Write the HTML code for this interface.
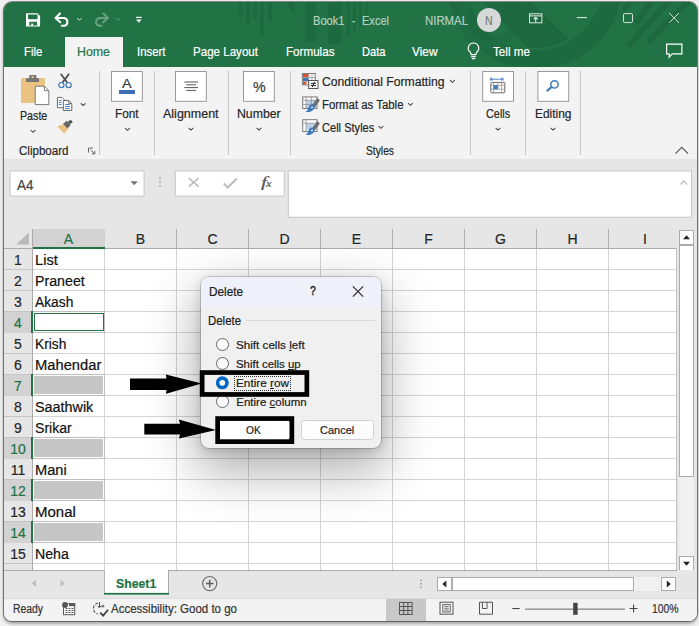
<!DOCTYPE html>
<html lang="en"><head><meta charset="utf-8"><title>Book1 - Excel</title>
<style>
html,body{margin:0;padding:0}
body{width:699px;height:626px;overflow:hidden;background:#f0f0f0;position:relative;font-family:"Liberation Sans",sans-serif}
.t{position:absolute;white-space:nowrap;display:block;-webkit-text-stroke:0.2px currentColor}
.a{position:absolute;display:block}
#win{position:absolute;left:4px;top:2px;width:693px;height:618.5px;border-radius:8px;overflow:hidden;background:#e6e6e6;box-shadow:0 0 0 1px rgba(0,0,0,.42),0 2px 3px 1px rgba(0,0,0,.30)}
#page{position:absolute;left:0;top:0;width:699px;height:626px}
svg{position:absolute;overflow:visible}

</style></head>
<body>
<div id="win"><div id="page" style="left:-4px;top:-2px">
<div class="a" style="left:0px;top:0px;width:699px;height:67px;background:#217346;"></div>
<svg style="left:0px;top:0px;" width="699" height="67" viewBox="0 0 699 67">
<defs><clipPath id="tb"><rect x="0" y="2" width="699" height="65"/></clipPath><clipPath id="rg"><circle cx="535" cy="-18" r="66"/></clipPath></defs>
<g clip-path="url(#tb)">
<g fill="#1e6a40">
<rect x="239" y="2" width="4" height="15"/><rect x="246" y="2" width="4" height="24"/><rect x="253" y="2" width="4" height="17"/><rect x="260" y="2" width="4" height="32"/><rect x="268" y="2" width="4" height="20"/>
<polygon points="286,2 294.5,2 294.5,14"/>
<rect x="305" y="2" width="11.5" height="40"/><rect x="328" y="2" width="13.5" height="42"/>
<rect x="347" y="2" width="3" height="34"/><rect x="353" y="2" width="3" height="30"/><rect x="359" y="2" width="3" height="26"/><rect x="365" y="2" width="3" height="22"/>
</g>
<circle cx="535" cy="-18" r="78" fill="none" stroke="#1e6a40" stroke-width="19"/>
<circle cx="489" cy="19" r="26" fill="none" stroke="#1f6d42" stroke-width="9"/>
<g stroke="#1d683e" stroke-width="4.2" clip-path="url(#rg)"><line x1="479" y1="-5" x2="559" y2="75"/><line x1="486" y1="-5" x2="566" y2="75"/><line x1="493" y1="-5" x2="573" y2="75"/><line x1="500" y1="-5" x2="580" y2="75"/><line x1="507" y1="-5" x2="587" y2="75"/><line x1="514" y1="-5" x2="594" y2="75"/><line x1="521" y1="-5" x2="601" y2="75"/></g>
<g stroke="#1d683e" stroke-width="6"><line x1="635" y1="-2" x2="623" y2="9"/><line x1="654" y1="-2.5" x2="636" y2="23"/><line x1="672" y1="-2.3" x2="628.5" y2="45.5"/><line x1="692" y1="-2.3" x2="648.2" y2="42.3"/></g>
</g>
</svg>
<svg style="left:26px;top:13px;" width="15" height="14" viewBox="0 0 15 14"><path d="M0.9 0.3H11.4L14.1 3V12.7A0.9 0.9 0 0 1 13.2 13.6H0.9A0.9 0.9 0 0 1 0 12.7V1.2A0.9 0.9 0 0 1 0.9 0.3Z" fill="#fff"/><path d="M2 1.5H11.6V5.4L10.9 6.2H2.7L2 5.4Z" fill="#217346"/><path d="M1.7 8.6H12.5V12.3H1.7Z" fill="#fff"/><path d="M3.3 8.8H11V12.5H3.3Z" fill="#217346"/><rect x="5.2" y="10.6" width="2" height="2" fill="#fff"/><path d="M12.6 3.2V12.3H13V3.4Z" fill="#217346" opacity="0"/></svg>
<svg style="left:54px;top:12px;" width="16" height="15" viewBox="0 0 16 15"><path d="M6 1.5L1.5 6L6.3 10.3" fill="none" stroke="#fff" stroke-width="2" stroke-linecap="round" stroke-linejoin="round"/><path d="M2 6H10.3A4 4 0 0 1 10.3 13.8H7.8" fill="none" stroke="#fff" stroke-width="2" stroke-linecap="round"/></svg>
<svg style="left:76px;top:17px;" width="7" height="5" viewBox="0 0 7 5"><g transform="translate(0.5,0.5)"><path d="M0.5 0.5L2.8 2.8L5.1 0.5" fill="none" stroke="#fff" stroke-width="1" opacity=".75"/></g></svg>
<svg style="left:93px;top:12px;" width="17" height="15" viewBox="0 0 17 15"><g transform="translate(0.5,0)"><g transform="translate(16,0) scale(-1,1)" opacity=".33"><path d="M6 1.5L1.5 6L6.3 10.3" fill="none" stroke="#fff" stroke-width="2" stroke-linecap="round" stroke-linejoin="round"/><path d="M2 6H10.3A4 4 0 0 1 10.3 13.8H7.8" fill="none" stroke="#fff" stroke-width="2" stroke-linecap="round"/></g></g></svg>
<svg style="left:115px;top:17px;" width="7" height="5" viewBox="0 0 7 5"><g transform="translate(0.5,0.5)"><path d="M0.5 0.5L2.8 2.8L5.1 0.5" fill="none" stroke="#fff" stroke-width="1" opacity=".3"/></g></svg>
<svg style="left:135px;top:16px;" width="8" height="8" viewBox="0 0 8 8"><g transform="translate(0.8,0.5)"><rect x="0.3" y="0.3" width="5.6" height="1.2" fill="#fff"/><path d="M0.2 3H6L3.1 6.2Z" fill="#fff"/></g></svg>
<span class="t" id="t0" style='left:312.50px;top:14.84px;font-size:12px;line-height:12px;color:#b4d0c0;transform:scaleX(0.9256);transform-origin:left center;'>Book1</span>
<span class="t" id="t1" style='left:352.00px;top:14.84px;font-size:12px;line-height:12px;color:#b4d0c0;transform:scaleX(0.8000);transform-origin:left center;'>-</span>
<span class="t" id="t2" style='left:362.00px;top:14.84px;font-size:12px;line-height:12px;color:#b4d0c0;transform:scaleX(0.9201);transform-origin:left center;'>Excel</span>
<span class="t" id="t3" style='left:424.50px;top:14.84px;font-size:12px;line-height:12px;color:#b4d0c0;transform:scaleX(0.9483);transform-origin:left center;'>NIRMAL</span>
<div class="a" style="left:477px;top:8px;width:24px;height:24px;border-radius:50%;background:#d6d9d7"></div>
<span class="t" id="t4" style='left:485.20px;top:14.54px;font-size:12px;line-height:12px;color:#6a706c;transform:scaleX(0.8764);transform-origin:left center;-webkit-text-stroke:0;'>N</span>
<svg style="left:529px;top:13px;" width="14" height="11" viewBox="0 0 14 11"><g transform="translate(0,0.3)"><rect x="0.5" y="0.5" width="12.4" height="9" fill="none" stroke="#dfeae4" stroke-width="1"/><line x1="0.5" y1="2.6" x2="12.9" y2="2.6" stroke="#dfeae4" stroke-width="1"/><path d="M6.7 8.6V4M4.6 6L6.7 3.9L8.8 6" fill="none" stroke="#dfeae4" stroke-width="1.1"/></g></svg>
<svg style="left:576px;top:16px;" width="12" height="3" viewBox="0 0 12 3"><g transform="translate(0.8,0.9)"><rect x="0" y="0.1" width="10.2" height="1.1" fill="#d5e4dc"/></g></svg>
<svg style="left:622px;top:12px;" width="12" height="12" viewBox="0 0 12 12"><g transform="translate(0.6,0.7)"><rect x="0.9" y="0.9" width="9" height="9" rx="1.2" fill="none" stroke="#d5e4dc" stroke-width="1"/></g></svg>
<svg style="left:669px;top:12px;" width="11" height="12" viewBox="0 0 11 12"><g transform="translate(0,0.8)"><path d="M0.2 0.2L10 10M10 0.2L0.2 10" stroke="#d5e4dc" stroke-width="1" fill="none"/></g></svg>
<div class="a" style="left:65px;top:37px;width:58px;height:31px;background:#f3f3f3"></div>
<span class="t" id="t5" style='left:24.00px;top:44.50px;font-size:13px;line-height:13px;color:#fff;transform:scaleX(0.8829);transform-origin:left center;'>File</span>
<span class="t" id="t6" style='left:77.00px;top:44.50px;font-size:13px;line-height:13px;color:#217346;transform:scaleX(0.9514);transform-origin:left center;'>Home</span>
<span class="t" id="t7" style='left:137.00px;top:44.50px;font-size:13px;line-height:13px;color:#fff;transform:scaleX(0.8765);transform-origin:left center;'>Insert</span>
<span class="t" id="t8" style='left:193.00px;top:44.50px;font-size:13px;line-height:13px;color:#fff;transform:scaleX(0.8902);transform-origin:left center;'>Page Layout</span>
<span class="t" id="t9" style='left:285.50px;top:44.50px;font-size:13px;line-height:13px;color:#fff;transform:scaleX(0.8950);transform-origin:left center;'>Formulas</span>
<span class="t" id="t10" style='left:361.50px;top:44.50px;font-size:13px;line-height:13px;color:#fff;transform:scaleX(0.8555);transform-origin:left center;'>Data</span>
<span class="t" id="t11" style='left:412.00px;top:44.50px;font-size:13px;line-height:13px;color:#fff;transform:scaleX(0.9122);transform-origin:left center;'>View</span>
<svg style="left:467px;top:42px;" width="13" height="19" viewBox="0 0 13 19"><path d="M6.5 1A5.2 5.2 0 0 0 3.3 10.3C3.9 11 4.1 11.6 4.1 12.6H8.9C8.9 11.6 9.1 11 9.7 10.3A5.2 5.2 0 0 0 6.5 1Z" fill="none" stroke="#fff" stroke-width="1.2"/><path d="M4.2 14.6H8.8M4.8 16.6H8.2" stroke="#fff" stroke-width="1.2" fill="none"/></svg>
<span class="t" id="t12" style='left:493.00px;top:44.50px;font-size:13px;line-height:13px;color:#fff;transform:scaleX(0.8983);transform-origin:left center;'>Tell me</span>
<svg style="left:666px;top:43px;" width="17" height="16" viewBox="0 0 17 16"><g transform="translate(0,0.5)"><path d="M0.6 0.6H15.9V10.3H6.2L3.2 13.6V10.3H0.6Z" fill="none" stroke="#fff" stroke-width="1.2" stroke-linejoin="miter"/></g></svg>
<div class="a" style="left:0px;top:67px;width:699px;height:91.5px;background:#f3f3f3;"></div>
<div class="a" style="left:0px;top:158.5px;width:699px;height:1px;background:#dadada;"></div>
<div class="a" style="left:99.0px;top:71px;width:1px;height:84px;background:#c9c9c9;"></div>
<div class="a" style="left:153.5px;top:71px;width:1px;height:84px;background:#c9c9c9;"></div>
<div class="a" style="left:228.0px;top:71px;width:1px;height:84px;background:#c9c9c9;"></div>
<div class="a" style="left:290.0px;top:71px;width:1px;height:84px;background:#c9c9c9;"></div>
<div class="a" style="left:470.0px;top:71px;width:1px;height:84px;background:#c9c9c9;"></div>
<div class="a" style="left:525.0px;top:71px;width:1px;height:84px;background:#c9c9c9;"></div>
<div class="a" style="left:580.0px;top:71px;width:1px;height:84px;background:#c9c9c9;"></div>
<svg style="left:20px;top:74px;" width="30" height="32" viewBox="0 0 30 32">
<rect x="1" y="4" width="24" height="25" rx="1.2" fill="#eac282"/>
<path d="M6 4.3H19V8H6Z" fill="#767676"/><path d="M10 1H15.6A0.8 0.8 0 0 1 16.4 1.8V5H9.2V1.8A0.8 0.8 0 0 1 10 1Z" fill="#767676"/><rect x="11.6" y="2.2" width="2.4" height="1.8" fill="#eac282"/>
<path d="M15.2 12.2H24.3L28.8 16.7V30.6H15.2Z" fill="#fff" stroke="#7b7b7b" stroke-width="1"/><path d="M24.3 12.2V16.7H28.8" fill="none" stroke="#7b7b7b" stroke-width="1"/>
</svg>
<span class="t" id="t13" style='left:19.80px;top:109.72px;font-size:12.5px;line-height:12.5px;color:#262626;transform:scaleX(0.8540);transform-origin:left center;'>Paste</span>
<svg style="left:30px;top:129px;" width="6" height="4" viewBox="0 0 6 4"><g transform="translate(0.4,0.8)"><path d="M0.3 0.3L2.7 2.5L5.1000000000000005 0.3" fill="none" stroke="#444" stroke-width="1.1" opacity="1"/></g></svg>
<svg style="left:57px;top:73px;" width="16" height="16" viewBox="0 0 16 16">
<path d="M3.7 0.8L10.4 9.8M12.1 0.8L5.4 9.8" stroke="#4f4f4f" stroke-width="1.8" fill="none"/>
<circle cx="4.4" cy="12.1" r="2.6" fill="none" stroke="#3b76b9" stroke-width="1.2"/><circle cx="11.6" cy="12.1" r="2.6" fill="none" stroke="#3b76b9" stroke-width="1.2"/>
</svg>
<svg style="left:56px;top:96px;" width="18" height="16" viewBox="0 0 18 16"><g transform="translate(0.5,0.5)">
<path d="M0.9 0.9H5.5L7.7 3.1V11.2H0.9Z" fill="#fff" stroke="#6a6a6a" stroke-width="1"/>
<path d="M2.4 4H5M2.4 6H5M2.4 8H5" stroke="#3b76b9" stroke-width=".9"/>
<path d="M6.8 4H12.2L15.3 7.1V14H6.8Z" fill="#fff" stroke="#6a6a6a" stroke-width="1"/><path d="M12.2 4V7.1H15.3" fill="none" stroke="#6a6a6a" stroke-width=".9"/>
<path d="M8.6 8H13.4M8.6 10H13.4M8.6 12H13.4" stroke="#3b76b9" stroke-width=".9"/>
</g></svg>
<svg style="left:80px;top:103px;" width="6" height="3" viewBox="0 0 6 3"><g transform="translate(0.5,0)"><path d="M0.3 0.3L2.7 2.5L5.1000000000000005 0.3" fill="none" stroke="#444" stroke-width="1.1" opacity="1"/></g></svg>
<svg style="left:56px;top:119px;" width="18" height="16" viewBox="0 0 18 16"><g transform="translate(0.5,0.5)">
<path d="M0.6 6.8L8.2 4.6L11.8 9.6L7.6 14.2Z" fill="#eac282"/>
<path d="M6.6 4.2L10.2 1.2L14.2 5.6L11 9Z" fill="#666"/>
<path d="M11.2 2.2L14.2 0.2L16.3 2.4L13.6 4.8Z" fill="#555"/>
</g></svg>
<span class="t" id="t14" style='left:18.50px;top:144.72px;font-size:12.5px;line-height:12.5px;color:#262626;transform:scaleX(0.9250);transform-origin:left center;'>Clipboard</span>
<svg style="left:88px;top:147px;" width="8" height="8" viewBox="0 0 8 8"><g transform="translate(0,0.5)"><path d="M0.5 5V0.5H5" fill="none" stroke="#666" stroke-width="1"/><path d="M2.6 2.4L6.6 6.2M6.8 3.4V6.4H3.8" fill="none" stroke="#666" stroke-width="1"/></g></svg>
<svg style="left:111px;top:71px;" width="32" height="31" viewBox="0 0 32 31"><rect x="0.5" y="0.5" width="30.8" height="29.8" rx="0" fill="#fff" stroke="#999" stroke-width="1"/></svg>
<span class="t" id="t15" style='left:122.30px;top:76.87px;font-size:13.5px;line-height:13.5px;color:#3a3a3a;transform:scaleX(1.0648);transform-origin:left center;'>A</span>
<div class="a" style="left:119px;top:90px;width:15.5px;height:3.5px;background:#3e6fb5;"></div>
<span class="t" id="t16" style='left:115.40px;top:107.52px;font-size:12.5px;line-height:12.5px;color:#262626;transform:scaleX(0.9394);transform-origin:left center;'>Font</span>
<svg style="left:124px;top:127px;" width="7" height="4" viewBox="0 0 7 4"><g transform="translate(0.8,0.8)"><path d="M0.3 0.3L2.7 2.5L5.1000000000000005 0.3" fill="none" stroke="#444" stroke-width="1.1" opacity="1"/></g></svg>
<svg style="left:175px;top:71px;" width="32" height="31" viewBox="0 0 32 31"><rect x="0.5" y="0.5" width="30.8" height="29.8" rx="0" fill="#fff" stroke="#999" stroke-width="1"/></svg>
<svg style="left:184px;top:81px;" width="15" height="11" viewBox="0 0 15 11"><path d="M0.3 1H14M2.3 3.8H12M0.3 6.6H14M2.3 9.4H12" stroke="#555" stroke-width="1" fill="none"/></svg>
<span class="t" id="t17" style='left:163.00px;top:107.52px;font-size:12.5px;line-height:12.5px;color:#262626;'>Alignment</span>
<svg style="left:188px;top:127px;" width="6" height="4" viewBox="0 0 6 4"><g transform="translate(0.3,0.6)"><path d="M0.3 0.3L2.7 2.5L5.1000000000000005 0.3" fill="none" stroke="#444" stroke-width="1.1" opacity="1"/></g></svg>
<svg style="left:243px;top:71px;" width="32" height="31" viewBox="0 0 32 31"><rect x="0.5" y="0.5" width="30.8" height="29.8" rx="0" fill="#fff" stroke="#999" stroke-width="1"/></svg>
<span class="t" id="t18" style='left:252.80px;top:79.00px;font-size:15px;line-height:15px;color:#3a3a3a;transform:scaleX(0.9518);transform-origin:left center;'>%</span>
<span class="t" id="t19" style='left:237.00px;top:107.52px;font-size:12.5px;line-height:12.5px;color:#262626;transform:scaleX(0.9827);transform-origin:left center;'>Number</span>
<svg style="left:256px;top:127px;" width="6" height="4" viewBox="0 0 6 4"><g transform="translate(0.3,0.6)"><path d="M0.3 0.3L2.7 2.5L5.1000000000000005 0.3" fill="none" stroke="#444" stroke-width="1.1" opacity="1"/></g></svg>
<svg style="left:301px;top:72px;" width="19" height="18" viewBox="0 0 19 18">
<rect x="1.4" y="1.5" width="12.8" height="11.4" fill="#fff" stroke="#7a7a7a" stroke-width="1"/>
<path d="M7.7 1.5V12.9M11 1.5V12.9M1.4 5.5H14.2M1.4 9.4H14.2" stroke="#9a9a9a" stroke-width=".8"/>
<rect x="1.9" y="2" width="5.5" height="3.1" fill="#d9532c"/><rect x="1.9" y="5.9" width="5.5" height="3.1" fill="#3f78bd"/><rect x="1.9" y="9.8" width="3.6" height="2.7" fill="#d9532c"/>
<rect x="7.7" y="8.5" width="9.3" height="8" fill="#fff" stroke="#555" stroke-width="1"/>
<path d="M9.8 11.4H14.9M9.8 13.6H14.9M13.6 9.9L11.2 15.2" stroke="#222" stroke-width="1"/>
</svg>
<span class="t" id="t20" style='left:321.50px;top:76.22px;font-size:12.5px;line-height:12.5px;color:#262626;transform:scaleX(0.9740);transform-origin:left center;'>Conditional Formatting</span>
<svg style="left:449px;top:79px;" width="7" height="4" viewBox="0 0 7 4"><g transform="translate(0.7,0.8)"><path d="M0.3 0.3L2.7 2.5L5.1000000000000005 0.3" fill="none" stroke="#444" stroke-width="1.1" opacity="1"/></g></svg>
<svg style="left:301px;top:95px;" width="20" height="18" viewBox="0 0 20 18">
<rect x="1.7" y="1.9" width="14.3" height="11.6" fill="#fff" stroke="#7a7a7a" stroke-width="1"/>
<rect x="5.2" y="5.4" width="10.3" height="7.6" fill="#bcd2ea"/>
<path d="M5.1 1.9V13.5M10.3 1.9V13.5M1.7 5.3H16M1.7 9.4H16" stroke="#8a8a8a" stroke-width=".8"/>
<path d="M16.4 2.8L18.8 5.6L14 12.2L11.3 10Z" fill="#6e6e6e"/>
<path d="M11.6 9.6C8.8 9.2 7.8 11.6 7.2 13.4C6.8 14.8 5.8 15.9 4.4 16.8C8.6 17.7 13 16.4 13.9 11.6Z" fill="#3f78bd"/><circle cx="11" cy="12.4" r="1" fill="#dce8f5"/>
</svg>
<span class="t" id="t21" style='left:321.50px;top:99.22px;font-size:12.5px;line-height:12.5px;color:#262626;transform:scaleX(0.9116);transform-origin:left center;'>Format as Table</span>
<svg style="left:407px;top:102px;" width="7" height="4" viewBox="0 0 7 4"><g transform="translate(0.7,0.8)"><path d="M0.3 0.3L2.7 2.5L5.1000000000000005 0.3" fill="none" stroke="#444" stroke-width="1.1" opacity="1"/></g></svg>
<svg style="left:301px;top:118px;" width="20" height="18" viewBox="0 0 20 18">
<rect x="1.7" y="1.7" width="14.3" height="11.8" fill="#fff" stroke="#7a7a7a" stroke-width="1"/>
<rect x="5.2" y="5.3" width="9.6" height="6.4" fill="#bcd2ea"/>
<path d="M5.1 1.7V13.5M1.7 5.2H16" stroke="#8a8a8a" stroke-width=".8"/>
<path d="M16.4 2.8L18.8 5.6L14 12.2L11.3 10Z" fill="#6e6e6e"/>
<path d="M11.6 9.6C8.8 9.2 7.8 11.6 7.2 13.4C6.8 14.8 5.8 15.9 4.4 16.8C8.6 17.7 13 16.4 13.9 11.6Z" fill="#3f78bd"/><circle cx="11" cy="12.4" r="1" fill="#dce8f5"/>
</svg>
<span class="t" id="t22" style='left:321.50px;top:122.22px;font-size:12.5px;line-height:12.5px;color:#262626;transform:scaleX(0.8857);transform-origin:left center;'>Cell Styles</span>
<svg style="left:378px;top:125px;" width="6" height="4" viewBox="0 0 6 4"><g transform="translate(0.2,0.8)"><path d="M0.3 0.3L2.7 2.5L5.1000000000000005 0.3" fill="none" stroke="#444" stroke-width="1.1" opacity="1"/></g></svg>
<span class="t" id="t23" style='left:366.30px;top:144.72px;font-size:12.5px;line-height:12.5px;color:#262626;transform:scaleX(0.8224);transform-origin:left center;'>Styles</span>
<svg style="left:482px;top:71px;" width="32" height="31" viewBox="0 0 32 31"><g transform="translate(0.2,0)"><rect x="0.5" y="0.5" width="30.8" height="29.8" rx="0" fill="#fff" stroke="#999" stroke-width="1"/></g></svg>
<svg style="left:489px;top:76px;" width="18" height="19" viewBox="0 0 18 19">
<path d="M1.6 3.2H14M1.6 1.7V4.7M14 1.7V4.7M3.6 1.8L2 3.2L3.6 4.6M12 1.8L13.6 3.2L12 4.6" stroke="#3f78bd" stroke-width=".9" fill="none"/>
<rect x="1.8" y="6.4" width="14" height="10.4" rx=".8" fill="#fff" stroke="#6a6a6a" stroke-width="1"/>
<path d="M1.8 9.3H15.8M1.8 13.2H15.8M4.6 6.4V16.8M8.9 6.4V13.2M12.6 6.4V16.8" stroke="#8a8a8a" stroke-width=".7"/>
<rect x="4.6" y="9.3" width="4.3" height="3.9" fill="#3f78bd"/>
</svg>
<span class="t" id="t24" style='left:485.80px;top:107.52px;font-size:12.5px;line-height:12.5px;color:#262626;transform:scaleX(0.8706);transform-origin:left center;'>Cells</span>
<svg style="left:495px;top:127px;" width="6" height="4" viewBox="0 0 6 4"><g transform="translate(0.3,0.6)"><path d="M0.3 0.3L2.7 2.5L5.1000000000000005 0.3" fill="none" stroke="#444" stroke-width="1.1" opacity="1"/></g></svg>
<svg style="left:537px;top:71px;" width="33" height="31" viewBox="0 0 33 31"><g transform="translate(0.4,0)"><rect x="0.5" y="0.5" width="30.8" height="29.8" rx="0" fill="#fff" stroke="#999" stroke-width="1"/></g></svg>
<svg style="left:545px;top:78px;" width="16" height="16" viewBox="0 0 16 16"><circle cx="9.5" cy="6.4" r="3.7" fill="none" stroke="#3f78bd" stroke-width="1.5"/><path d="M6.6 9L2.4 12.6" stroke="#3f78bd" stroke-width="2.1" stroke-linecap="round"/></svg>
<span class="t" id="t25" style='left:534.70px;top:107.52px;font-size:12.5px;line-height:12.5px;color:#262626;transform:scaleX(0.9546);transform-origin:left center;'>Editing</span>
<svg style="left:550px;top:127px;" width="6" height="4" viewBox="0 0 6 4"><g transform="translate(0.3,0.6)"><path d="M0.3 0.3L2.7 2.5L5.1000000000000005 0.3" fill="none" stroke="#444" stroke-width="1.1" opacity="1"/></g></svg>
<svg style="left:675px;top:146px;" width="14" height="9" viewBox="0 0 14 9"><g transform="translate(0,0.5)"><path d="M0.5 7.2L6.8 0.8L13.1 7.2" fill="none" stroke="#555" stroke-width="1.1"/></g></svg>
<div class="a" style="left:0px;top:159px;width:699px;height:70px;background:#e6e6e6;"></div>
<svg style="left:9px;top:170px;" width="136" height="27" viewBox="0 0 136 27"><g transform="translate(0.6,0.4)"><rect x="0.5" y="0.5" width="134" height="25.2" rx="0" fill="#fff" stroke="#c6c6c6" stroke-width="1"/></g></svg>
<span class="t" id="t26" style='left:16.50px;top:177.65px;font-size:14px;line-height:14px;color:#444;transform:scaleX(0.9635);transform-origin:left center;'>A4</span>
<svg style="left:130px;top:181px;" width="9" height="5" viewBox="0 0 9 5"><g transform="translate(0.5,0)"><path d="M0 0.2H7.4L3.7 4.2Z" fill="#777"/></g></svg>
<svg style="left:159px;top:177px;" width="3" height="3" viewBox="0 0 3 3"><g transform="translate(0.2,0.7)"><rect width="1.6" height="1.6" fill="#a6a6a6"/></g></svg>
<svg style="left:159px;top:181px;" width="3" height="3" viewBox="0 0 3 3"><g transform="translate(0.2,0.5)"><rect width="1.6" height="1.6" fill="#a6a6a6"/></g></svg>
<svg style="left:159px;top:185px;" width="3" height="3" viewBox="0 0 3 3"><g transform="translate(0.2,0.2)"><rect width="1.6" height="1.6" fill="#a6a6a6"/></g></svg>
<svg style="left:174px;top:170px;" width="111" height="27" viewBox="0 0 111 27"><g transform="translate(0.8,0.4)"><rect x="0.5" y="0.5" width="109" height="25.2" rx="0" fill="#fff" stroke="#c6c6c6" stroke-width="1"/></g></svg>
<svg style="left:188px;top:177px;" width="12" height="11" viewBox="0 0 12 11"><g transform="translate(0,0.6)"><path d="M0.8 0.5L10.6 9M10.6 0.5L0.8 9" stroke="#bdbdbd" stroke-width="1.7" fill="none"/></g></svg>
<svg style="left:223px;top:177px;" width="15" height="12" viewBox="0 0 15 12"><g transform="translate(0,0.6)"><path d="M0.8 5.8L4.8 9.8L13.8 0.8" stroke="#bdbdbd" stroke-width="2.1" fill="none"/></g></svg>
<span class="t" id="t27" style='left:260.70px;top:175.10px;font-size:15px;line-height:15px;color:#555;transform:scaleX(1.4382);transform-origin:left center;font-family:"Liberation Serif",serif;font-style:italic;'>f</span>
<span class="t" id="t28" style='left:266.30px;top:179.41px;font-size:10.5px;line-height:10.5px;color:#555;transform:scaleX(1.1987);transform-origin:left center;font-family:"Liberation Serif",serif;font-style:italic;'>x</span>
<svg style="left:287px;top:170px;" width="405" height="48" viewBox="0 0 405 48"><g transform="translate(0.8,0.4)"><rect x="0.5" y="0.5" width="403.2" height="46.3" rx="0" fill="#fff" stroke="#c6c6c6" stroke-width="1"/></g></svg>
<svg style="left:680px;top:180px;" width="8" height="5" viewBox="0 0 8 5"><path d="M0.6 4.6L3.8 1L7 4.6" stroke="#c4c4c4" stroke-width="1.5" fill="none"/></svg>
<div class="a" style="left:33px;top:249px;width:643px;height:321px;background:#fff;"></div>
<div class="a" style="left:4px;top:229px;width:672px;height:19px;background:#e6e6e6;"></div>
<div class="a" style="left:4px;top:249px;width:28.5px;height:321px;background:#e6e6e6;"></div>
<div class="a" style="left:104.0px;top:249px;width:1px;height:321px;background:#d4d4d4;"></div>
<div class="a" style="left:104.0px;top:228.5px;width:1px;height:20px;background:#b1b1b1;"></div>
<div class="a" style="left:176.0px;top:249px;width:1px;height:321px;background:#d4d4d4;"></div>
<div class="a" style="left:176.0px;top:228.5px;width:1px;height:20px;background:#b1b1b1;"></div>
<div class="a" style="left:248.0px;top:249px;width:1px;height:321px;background:#d4d4d4;"></div>
<div class="a" style="left:248.0px;top:228.5px;width:1px;height:20px;background:#b1b1b1;"></div>
<div class="a" style="left:320.0px;top:249px;width:1px;height:321px;background:#d4d4d4;"></div>
<div class="a" style="left:320.0px;top:228.5px;width:1px;height:20px;background:#b1b1b1;"></div>
<div class="a" style="left:392.0px;top:249px;width:1px;height:321px;background:#d4d4d4;"></div>
<div class="a" style="left:392.0px;top:228.5px;width:1px;height:20px;background:#b1b1b1;"></div>
<div class="a" style="left:464.0px;top:249px;width:1px;height:321px;background:#d4d4d4;"></div>
<div class="a" style="left:464.0px;top:228.5px;width:1px;height:20px;background:#b1b1b1;"></div>
<div class="a" style="left:536.0px;top:249px;width:1px;height:321px;background:#d4d4d4;"></div>
<div class="a" style="left:536.0px;top:228.5px;width:1px;height:20px;background:#b1b1b1;"></div>
<div class="a" style="left:608.0px;top:249px;width:1px;height:321px;background:#d4d4d4;"></div>
<div class="a" style="left:608.0px;top:228.5px;width:1px;height:20px;background:#b1b1b1;"></div>
<div class="a" style="left:33px;top:269px;width:643px;height:1px;background:#d4d4d4;"></div>
<div class="a" style="left:4px;top:269px;width:28.5px;height:1px;background:#c6c6c6;"></div>
<div class="a" style="left:33px;top:290px;width:643px;height:1px;background:#d4d4d4;"></div>
<div class="a" style="left:4px;top:290px;width:28.5px;height:1px;background:#c6c6c6;"></div>
<div class="a" style="left:33px;top:311px;width:643px;height:1px;background:#d4d4d4;"></div>
<div class="a" style="left:4px;top:311px;width:28.5px;height:1px;background:#c6c6c6;"></div>
<div class="a" style="left:33px;top:332px;width:643px;height:1px;background:#d4d4d4;"></div>
<div class="a" style="left:4px;top:332px;width:28.5px;height:1px;background:#c6c6c6;"></div>
<div class="a" style="left:33px;top:353px;width:643px;height:1px;background:#d4d4d4;"></div>
<div class="a" style="left:4px;top:353px;width:28.5px;height:1px;background:#c6c6c6;"></div>
<div class="a" style="left:33px;top:374px;width:643px;height:1px;background:#d4d4d4;"></div>
<div class="a" style="left:4px;top:374px;width:28.5px;height:1px;background:#c6c6c6;"></div>
<div class="a" style="left:33px;top:395px;width:643px;height:1px;background:#d4d4d4;"></div>
<div class="a" style="left:4px;top:395px;width:28.5px;height:1px;background:#c6c6c6;"></div>
<div class="a" style="left:33px;top:416px;width:643px;height:1px;background:#d4d4d4;"></div>
<div class="a" style="left:4px;top:416px;width:28.5px;height:1px;background:#c6c6c6;"></div>
<div class="a" style="left:33px;top:437px;width:643px;height:1px;background:#d4d4d4;"></div>
<div class="a" style="left:4px;top:437px;width:28.5px;height:1px;background:#c6c6c6;"></div>
<div class="a" style="left:33px;top:458px;width:643px;height:1px;background:#d4d4d4;"></div>
<div class="a" style="left:4px;top:458px;width:28.5px;height:1px;background:#c6c6c6;"></div>
<div class="a" style="left:33px;top:479px;width:643px;height:1px;background:#d4d4d4;"></div>
<div class="a" style="left:4px;top:479px;width:28.5px;height:1px;background:#c6c6c6;"></div>
<div class="a" style="left:33px;top:500px;width:643px;height:1px;background:#d4d4d4;"></div>
<div class="a" style="left:4px;top:500px;width:28.5px;height:1px;background:#c6c6c6;"></div>
<div class="a" style="left:33px;top:521px;width:643px;height:1px;background:#d4d4d4;"></div>
<div class="a" style="left:4px;top:521px;width:28.5px;height:1px;background:#c6c6c6;"></div>
<div class="a" style="left:33px;top:542px;width:643px;height:1px;background:#d4d4d4;"></div>
<div class="a" style="left:4px;top:542px;width:28.5px;height:1px;background:#c6c6c6;"></div>
<div class="a" style="left:33px;top:563px;width:643px;height:1px;background:#d4d4d4;"></div>
<div class="a" style="left:4px;top:563px;width:28.5px;height:1px;background:#c6c6c6;"></div>
<div class="a" style="left:4px;top:248px;width:672px;height:1px;background:#ababab;"></div>
<div class="a" style="left:32px;top:229px;width:1px;height:341px;background:#ababab;"></div>
<div class="a" style="left:676px;top:248px;width:1px;height:323px;background:#c0c0c0;"></div>
<svg style="left:16px;top:232px;" width="14" height="14" viewBox="0 0 14 14"><path d="M0.3 12.6H12.8V0.5Z" fill="#b9b9b9"/></svg>
<div class="a" style="left:33px;top:228.5px;width:71.5px;height:18.5px;background:#d2d2d2;"></div>
<div class="a" style="left:33px;top:246.7px;width:71.5px;height:2px;background:#217346;"></div>
<span class="t" id="t29" style='left:63.83px;top:232.15px;font-size:14px;line-height:14px;color:#217346;'>A</span>
<span class="t" id="t30" style='left:135.83px;top:232.15px;font-size:14px;line-height:14px;color:#262626;'>B</span>
<span class="t" id="t31" style='left:207.44px;top:232.15px;font-size:14px;line-height:14px;color:#262626;'>C</span>
<span class="t" id="t32" style='left:279.44px;top:232.15px;font-size:14px;line-height:14px;color:#262626;'>D</span>
<span class="t" id="t33" style='left:351.83px;top:232.15px;font-size:14px;line-height:14px;color:#262626;'>E</span>
<span class="t" id="t34" style='left:424.22px;top:232.15px;font-size:14px;line-height:14px;color:#262626;'>F</span>
<span class="t" id="t35" style='left:495.05px;top:232.15px;font-size:14px;line-height:14px;color:#262626;'>G</span>
<span class="t" id="t36" style='left:567.44px;top:232.15px;font-size:14px;line-height:14px;color:#262626;'>H</span>
<span class="t" id="t37" style='left:643.05px;top:232.15px;font-size:14px;line-height:14px;color:#262626;'>I</span>
<span class="t" id="t38" style='left:14.10px;top:253.15px;font-size:14px;line-height:14px;color:#262626;'>1</span>
<span class="t" id="t39" style='left:34.90px;top:253.15px;font-size:14px;line-height:14px;color:#111;transform:scaleX(1.0460);transform-origin:left center;'>List</span>
<span class="t" id="t40" style='left:14.10px;top:274.15px;font-size:14px;line-height:14px;color:#262626;'>2</span>
<span class="t" id="t41" style='left:34.90px;top:274.15px;font-size:14px;line-height:14px;color:#111;transform:scaleX(1.0154);transform-origin:left center;'>Praneet</span>
<span class="t" id="t42" style='left:14.10px;top:295.15px;font-size:14px;line-height:14px;color:#262626;'>3</span>
<span class="t" id="t43" style='left:34.90px;top:295.15px;font-size:14px;line-height:14px;color:#111;transform:scaleX(0.9840);transform-origin:left center;'>Akash</span>
<div class="a" style="left:4px;top:311.5px;width:28px;height:21px;background:#d2d2d2;"></div>
<div class="a" style="left:31px;top:311px;width:2px;height:22px;background:#217346;"></div>
<div class="a" style="left:33px;top:311px;width:72px;height:1px;background:#bebebe;"></div>
<div class="a" style="left:33px;top:332px;width:72px;height:1px;background:#bebebe;"></div>
<div class="a" style="left:104px;top:311px;width:1px;height:22px;background:#bebebe;"></div>
<div class="a" style="left:34px;top:313px;width:69.5px;height:18.2px;border:1.3px solid #217346;box-sizing:border-box;background:#fff"></div>
<span class="t" id="t44" style='left:14.10px;top:316.15px;font-size:14px;line-height:14px;color:#217346;'>4</span>
<span class="t" id="t45" style='left:14.10px;top:337.15px;font-size:14px;line-height:14px;color:#262626;'>5</span>
<span class="t" id="t46" style='left:34.90px;top:337.15px;font-size:14px;line-height:14px;color:#111;transform:scaleX(0.9810);transform-origin:left center;'>Krish</span>
<span class="t" id="t47" style='left:14.10px;top:358.15px;font-size:14px;line-height:14px;color:#262626;'>6</span>
<span class="t" id="t48" style='left:34.90px;top:358.15px;font-size:14px;line-height:14px;color:#111;transform:scaleX(1.0516);transform-origin:left center;'>Mahendar</span>
<div class="a" style="left:4px;top:374.5px;width:28px;height:21px;background:#d2d2d2;"></div>
<div class="a" style="left:31px;top:374px;width:2px;height:22px;background:#217346;"></div>
<div class="a" style="left:33px;top:374px;width:72px;height:1px;background:#bebebe;"></div>
<div class="a" style="left:33px;top:395px;width:72px;height:1px;background:#bebebe;"></div>
<div class="a" style="left:104px;top:374px;width:1px;height:22px;background:#bebebe;"></div>
<div class="a" style="left:34.3px;top:375.8px;width:68.8px;height:18px;background:#c6c6c6;"></div>
<span class="t" id="t49" style='left:14.10px;top:379.15px;font-size:14px;line-height:14px;color:#217346;'>7</span>
<span class="t" id="t50" style='left:14.10px;top:400.15px;font-size:14px;line-height:14px;color:#262626;'>8</span>
<span class="t" id="t51" style='left:34.90px;top:400.15px;font-size:14px;line-height:14px;color:#111;transform:scaleX(1.0262);transform-origin:left center;'>Saathwik</span>
<span class="t" id="t52" style='left:14.10px;top:421.15px;font-size:14px;line-height:14px;color:#262626;'>9</span>
<span class="t" id="t53" style='left:34.90px;top:421.15px;font-size:14px;line-height:14px;color:#111;transform:scaleX(1.0065);transform-origin:left center;'>Srikar</span>
<div class="a" style="left:4px;top:437.5px;width:28px;height:21px;background:#d2d2d2;"></div>
<div class="a" style="left:31px;top:437px;width:2px;height:22px;background:#217346;"></div>
<div class="a" style="left:33px;top:437px;width:72px;height:1px;background:#bebebe;"></div>
<div class="a" style="left:33px;top:458px;width:72px;height:1px;background:#bebebe;"></div>
<div class="a" style="left:104px;top:437px;width:1px;height:22px;background:#bebebe;"></div>
<div class="a" style="left:34.3px;top:438.8px;width:68.8px;height:18px;background:#c6c6c6;"></div>
<span class="t" id="t54" style='left:10.21px;top:442.15px;font-size:14px;line-height:14px;color:#217346;'>10</span>
<span class="t" id="t55" style='left:10.73px;top:463.15px;font-size:14px;line-height:14px;color:#262626;'>11</span>
<span class="t" id="t56" style='left:34.90px;top:463.15px;font-size:14px;line-height:14px;color:#111;transform:scaleX(1.0475);transform-origin:left center;'>Mani</span>
<div class="a" style="left:4px;top:479.5px;width:28px;height:21px;background:#d2d2d2;"></div>
<div class="a" style="left:31px;top:479px;width:2px;height:22px;background:#217346;"></div>
<div class="a" style="left:33px;top:479px;width:72px;height:1px;background:#bebebe;"></div>
<div class="a" style="left:33px;top:500px;width:72px;height:1px;background:#bebebe;"></div>
<div class="a" style="left:104px;top:479px;width:1px;height:22px;background:#bebebe;"></div>
<div class="a" style="left:34.3px;top:480.8px;width:68.8px;height:18px;background:#c6c6c6;"></div>
<span class="t" id="t57" style='left:10.21px;top:484.15px;font-size:14px;line-height:14px;color:#217346;'>12</span>
<span class="t" id="t58" style='left:10.21px;top:505.15px;font-size:14px;line-height:14px;color:#262626;'>13</span>
<span class="t" id="t59" style='left:34.90px;top:505.15px;font-size:14px;line-height:14px;color:#111;transform:scaleX(1.0697);transform-origin:left center;'>Monal</span>
<div class="a" style="left:4px;top:521.5px;width:28px;height:21px;background:#d2d2d2;"></div>
<div class="a" style="left:31px;top:521px;width:2px;height:22px;background:#217346;"></div>
<div class="a" style="left:33px;top:521px;width:72px;height:1px;background:#bebebe;"></div>
<div class="a" style="left:33px;top:542px;width:72px;height:1px;background:#bebebe;"></div>
<div class="a" style="left:104px;top:521px;width:1px;height:22px;background:#bebebe;"></div>
<div class="a" style="left:34.3px;top:522.8px;width:68.8px;height:18px;background:#c6c6c6;"></div>
<span class="t" id="t60" style='left:10.21px;top:526.15px;font-size:14px;line-height:14px;color:#217346;'>14</span>
<span class="t" id="t61" style='left:10.21px;top:547.15px;font-size:14px;line-height:14px;color:#262626;'>15</span>
<span class="t" id="t62" style='left:34.90px;top:547.15px;font-size:14px;line-height:14px;color:#111;transform:scaleX(1.0099);transform-origin:left center;'>Neha</span>
<div class="a" style="left:677px;top:229px;width:20px;height:342px;background:#e6e6e6;"></div>
<div class="a" style="left:679px;top:230px;width:15px;height:15px;background:#fff;border:1px solid #ababab;box-sizing:border-box"></div>
<svg style="left:683px;top:235px;" width="7" height="5" viewBox="0 0 7 5"><path d="M0 4.3H7L3.5 0.3Z" fill="#222"/></svg>
<div class="a" style="left:679px;top:245px;width:15px;height:232px;background:#fff;border:1px solid #ababab;box-sizing:border-box"></div>
<div class="a" style="left:679px;top:477px;width:15px;height:80px;background:#f1f1f1;"></div>
<div class="a" style="left:679px;top:556px;width:15px;height:15px;background:#fff;border:1px solid #ababab;box-sizing:border-box"></div>
<svg style="left:683px;top:561px;" width="7" height="6" viewBox="0 0 7 6"><g transform="translate(0,0.5)"><path d="M0 0.3H7L3.5 4.3Z" fill="#222"/></g></svg>
<div class="a" style="left:4px;top:570px;width:693px;height:28px;background:#e6e6e6;"></div>
<div class="a" style="left:4px;top:570px;width:673px;height:1px;background:#ababab;"></div>
<svg style="left:31px;top:579px;" width="6" height="9" viewBox="0 0 6 9"><path d="M5 0.5V8L0.5 4.25Z" fill="#c3c3c3"/></svg>
<svg style="left:60px;top:579px;" width="6" height="9" viewBox="0 0 6 9"><path d="M0.5 0.5V8L5 4.25Z" fill="#c3c3c3"/></svg>
<div class="a" style="left:104px;top:570px;width:65px;height:24px;background:#fff;"></div>
<div class="a" style="left:104px;top:570px;width:1px;height:24px;background:#b5b5b5;"></div>
<div class="a" style="left:168px;top:570px;width:1px;height:24px;background:#ababab;"></div>
<svg style="left:104px;top:592px;" width="66" height="3" viewBox="0 0 66 3"><g transform="translate(0,0.9)"><rect width="65" height="1.7" fill="#217346"/></g></svg>
<span class="t" id="t63" style='left:116.00px;top:577.00px;font-size:13px;line-height:13px;color:#217346;font-weight:bold;transform:scaleX(0.9428);transform-origin:left center;'>Sheet1</span>
<svg style="left:201px;top:575px;" width="18" height="18" viewBox="0 0 18 18"><circle cx="8.7" cy="8.6" r="7.1" fill="none" stroke="#6e6e6e" stroke-width="1.2"/><path d="M4.9 8.6H12.5M8.7 4.8V12.4" stroke="#5e5e5e" stroke-width="1.5"/></svg>
<svg style="left:420px;top:579px;" width="3" height="3" viewBox="0 0 3 3"><g transform="translate(0.3,0.5)"><rect width="1.6" height="1.6" fill="#a2a2a2"/></g></svg>
<svg style="left:420px;top:583px;" width="3" height="2" viewBox="0 0 3 2"><g transform="translate(0.3,0)"><rect width="1.6" height="1.6" fill="#a2a2a2"/></g></svg>
<svg style="left:420px;top:586px;" width="3" height="3" viewBox="0 0 3 3"><g transform="translate(0.3,0.5)"><rect width="1.6" height="1.6" fill="#a2a2a2"/></g></svg>
<div class="a" style="left:452px;top:577px;width:209px;height:14px;background:#f1f1f1;"></div>
<div class="a" style="left:437px;top:577px;width:15px;height:14px;background:#fff;border:1px solid #ababab;box-sizing:border-box"></div>
<svg style="left:442px;top:580px;" width="5" height="8" viewBox="0 0 5 8"><g transform="translate(0,0.5)"><path d="M4.3 0V7L0.3 3.5Z" fill="#222"/></g></svg>
<div class="a" style="left:451.5px;top:577px;width:182.5px;height:14px;background:#fff;border:1px solid #ababab;box-sizing:border-box"></div>
<div class="a" style="left:661px;top:577px;width:15px;height:14px;background:#fff;border:1px solid #ababab;box-sizing:border-box"></div>
<svg style="left:666px;top:580px;" width="6" height="8" viewBox="0 0 6 8"><g transform="translate(0.5,0.5)"><path d="M0.3 0V7L4.3 3.5Z" fill="#222"/></g></svg>
<div class="a" style="left:4px;top:598px;width:693px;height:24px;background:#f3f3f3;"></div>
<div class="a" style="left:4px;top:598px;width:693px;height:1px;background:#dcdcdc;"></div>
<span class="t" id="t64" style='left:12.60px;top:602.64px;font-size:12px;line-height:12px;color:#333;transform:scaleX(0.8649);transform-origin:left center;'>Ready</span>
<svg style="left:61px;top:601px;" width="16" height="16" viewBox="0 0 16 16"><rect x="2.5" y="2.7" width="11.2" height="11" fill="#fbfbfb" stroke="#5a5a5a" stroke-width="1"/><rect x="8" y="2.2" width="6.2" height="3" fill="#5a5a5a"/>
<path d="M4.5 7.5H6.5M7.5 7.5H9.5M10.5 7.5H12.5M4.5 9.5H6.5M7.5 9.5H9.5M10.5 9.5H12.5M4.5 11.5H6.5M7.5 11.5H9.5M10.5 11.5H12.5" stroke="#5a5a5a" stroke-width="1"/><circle cx="4" cy="4" r="2.9" fill="#555"/></svg>
<svg style="left:92px;top:601px;" width="18" height="16" viewBox="0 0 18 16"><path d="M6 2A5.6 5.6 0 0 0 6 13" fill="none" stroke="#555" stroke-width="1.1" stroke-dasharray="3 1.5"/>
<path d="M7.5 1V6.5M5.6 4.8L7.5 6.8L9.4 4.8M8.5 5.2H12M10.8 3.8L12.2 5.2L10.8 6.6" fill="none" stroke="#555" stroke-width="1"/>
<path d="M8.2 11.6L11.2 14.6L16 8.8" fill="none" stroke="#444" stroke-width="1.8"/></svg>
<span class="t" id="t65" style='left:111.00px;top:602.64px;font-size:12px;line-height:12px;color:#333;transform:scaleX(0.9589);transform-origin:left center;'>Accessibility: Good to go</span>
<div class="a" style="left:386px;top:599px;width:39.7px;height:23px;background:#c8c8c8;"></div>
<svg style="left:399px;top:602px;" width="14" height="14" viewBox="0 0 14 14"><rect x="0.5" y="0.5" width="12.6" height="12" fill="none" stroke="#555" stroke-width="1"/><path d="M4.7 0.5V12.5M8.9 0.5V12.5M0.5 4.5H13.1M0.5 8.5H13.1" stroke="#555" stroke-width="1"/></svg>
<svg style="left:439px;top:601px;" width="16" height="15" viewBox="0 0 16 15"><g transform="translate(0.5,0.7)"><rect x="0.5" y="0.5" width="13" height="12" fill="none" stroke="#555" stroke-width="1"/><rect x="3.3" y="2.9" width="7.4" height="7.4" fill="none" stroke="#555" stroke-width=".9"/><path d="M4.8 4.8H9.2M4.8 6.6H9.2M4.8 8.4H9.2" stroke="#555" stroke-width=".8"/></g></svg>
<svg style="left:479px;top:601px;" width="15" height="15" viewBox="0 0 15 15"><g transform="translate(0,0.7)"><path d="M0.5 0.5H13.5V12.5H0.5Z" fill="none" stroke="#555" stroke-width="1"/><path d="M3.4 0.5V6.8H8V0.5" fill="none" stroke="#555" stroke-width="1"/></g></svg>
<svg style="left:512px;top:608px;" width="9" height="2" viewBox="0 0 9 2"><g transform="translate(0.3,0)"><rect width="7.4" height="1.1" fill="#444"/></g></svg>
<svg style="left:525px;top:608px;" width="100" height="3" viewBox="0 0 100 3"><g transform="translate(0,0.6)"><rect width="100" height="1" fill="#666"/></g></svg>
<svg style="left:573px;top:602px;" width="6" height="14" viewBox="0 0 6 14"><g transform="translate(0.2,0.8)"><rect width="4.4" height="12" fill="#444"/></g></svg>
<svg style="left:629px;top:604px;" width="10" height="10" viewBox="0 0 10 10"><g transform="translate(0.6,0.3)"><path d="M0 4.2H8M4 0.2V8.2" stroke="#444" stroke-width="1.1"/></g></svg>
<span class="t" id="t66" style='left:652.00px;top:602.84px;font-size:12px;line-height:12px;color:#333;transform:scaleX(0.8631);transform-origin:left center;'>100%</span>
<div class="a" style="left:201px;top:276.5px;width:180px;height:171px;border-radius:8px;background:#f0f0f0;box-shadow:0 0 0 1px rgba(0,0,0,.17),0 20px 50px 5px rgba(0,0,0,.30),0 3px 12px rgba(0,0,0,.16);overflow:hidden"><div class="a" style="left:0;top:0;width:180px;height:30px;background:#eef1fa"></div></div>
<span class="t" id="t67" style='left:208.80px;top:285.84px;font-size:12px;line-height:12px;color:#1b1b1b;transform:scaleX(0.9802);transform-origin:left center;'>Delete</span>
<span class="t" id="t68" style='left:310.20px;top:285.42px;font-size:12.5px;line-height:12.5px;color:#1b1b1b;transform:scaleX(0.8342);transform-origin:left center;-webkit-text-stroke:0.45px currentColor;'>?</span>
<svg style="left:352px;top:286px;" width="12" height="11" viewBox="0 0 12 11"><g transform="translate(0.5,0)"><path d="M0.4 0.4L10.6 10.6M10.6 0.4L0.4 10.6" stroke="#222" stroke-width="1.1" fill="none"/></g></svg>
<span class="t" id="t69" style='left:208.00px;top:314.84px;font-size:12px;line-height:12px;color:#1b1b1b;transform:scaleX(0.9514);transform-origin:left center;'>Delete</span>
<div class="a" style="left:246px;top:320px;width:128.5px;height:1px;background:#dcdcdc;"></div>
<div class="a" style="left:215.8px;top:338.0px;width:13px;height:13px;border-radius:50%;background:#fcfcfc;border:1px solid #666;box-sizing:border-box"></div>
<span class="t" id="t70" style='left:236.30px;top:339.57px;font-size:11.5px;line-height:11.5px;color:#1b1b1b;transform:scaleX(1.0136);transform-origin:left center;'>Shift cells <u>l</u>eft</span>
<div class="a" style="left:215.8px;top:357.1px;width:13px;height:13px;border-radius:50%;background:#fcfcfc;border:1px solid #666;box-sizing:border-box"></div>
<span class="t" id="t71" style='left:236.30px;top:358.57px;font-size:11.5px;line-height:11.5px;color:#1b1b1b;transform:scaleX(0.9918);transform-origin:left center;'>Shift cells <u>u</u>p</span>
<svg style="left:215px;top:375px;" width="15" height="15" viewBox="0 0 15 15"><g transform="translate(0.3,0.8)"><circle cx="7" cy="7" r="4.7" fill="#fff" stroke="#0067c0" stroke-width="3.6"/></g></svg>
<span class="t" id="t72" style='left:236.00px;top:377.57px;font-size:11.5px;line-height:11.5px;color:#1b1b1b;transform:scaleX(1.0232);transform-origin:left center;'>Entire <u>r</u>ow</span>
<div class="a" style="left:234.3px;top:375.5px;width:56.5px;height:15.5px;border:1px dotted #333;box-sizing:border-box"></div>
<div class="a" style="left:215.8px;top:395.2px;width:13px;height:13px;border-radius:50%;background:#fcfcfc;border:1px solid #666;box-sizing:border-box"></div>
<span class="t" id="t73" style='left:236.30px;top:396.57px;font-size:11.5px;line-height:11.5px;color:#1b1b1b;'>Entire <u>c</u>olumn</span>
<div class="a" style="left:218px;top:419.5px;width:72px;height:20.5px;background:#fff;box-sizing:border-box"></div>
<div class="a" style="left:289px;top:420.5px;width:1px;height:1.5px;background:#0067c0;"></div>
<div class="a" style="left:289px;top:438px;width:1px;height:1.5px;background:#0067c0;"></div>
<span class="t" id="t74" style='left:246.30px;top:424.87px;font-size:11.5px;line-height:11.5px;color:#1b1b1b;transform:scaleX(0.8842);transform-origin:left center;'>OK</span>
<div class="a" style="left:301px;top:419.5px;width:72.5px;height:20px;border-radius:3.5px;background:#fdfdfd;border:1px solid #d0d0d0;box-sizing:border-box"></div>
<span class="t" id="t75" style='left:320.30px;top:424.87px;font-size:11.5px;line-height:11.5px;color:#1b1b1b;transform:scaleX(0.9550);transform-origin:left center;'>Cancel</span>
<svg style="left:195px;top:365px;" width="120" height="40" viewBox="0 0 120 40"><rect x="7.15" y="7.55" width="104.7" height="21.9" fill="none" stroke="#000" stroke-width="4.7"/></svg>
<svg style="left:210px;top:410px;" width="90" height="40" viewBox="0 0 90 40"><rect x="7.65" y="8.55" width="74.2" height="23.1" fill="none" stroke="#000" stroke-width="4.7"/></svg>
<svg style="left:128px;top:370px;" width="76" height="28" viewBox="0 0 76 28"><path d="M2 8.6H38.5L37.8 4.4L73.8 13.6L38 23.8L38.6 20H2Z" fill="#000"/></svg>
<svg style="left:142px;top:415px;" width="76" height="28" viewBox="0 0 76 28"><path d="M2.3 8.8H38L36.8 4.4L74 15L37 23.6L38 19.6H2.3Z" fill="#000"/></svg>
</div></div>
</body></html>
